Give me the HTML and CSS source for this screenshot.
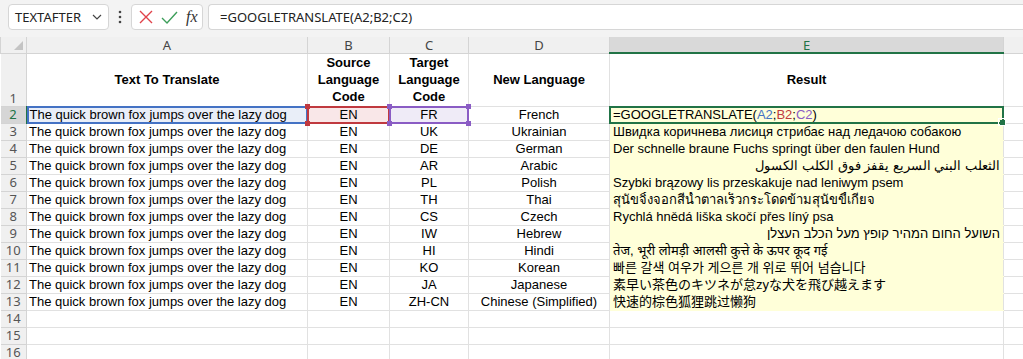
FILE: index.html
```html
<!DOCTYPE html>
<html lang="en">
<head>
    <meta charset="UTF-8">
    <title>GOOGLETRANSLATE - Sheet1</title>
    <link rel="stylesheet" href="styles.css">
</head>
<body>
    <!-- Formula bar -->
    <div class="toolbar">
        <div class="name-box">
            <span>TEXTAFTER</span>
            <svg class="chevron" width="10" height="6" viewBox="0 0 10 6"><path d="M1 1 L5 5 L9 1" fill="none" stroke="#444" stroke-width="1.2"/></svg>
        </div>
        <div class="more">
            <svg width="4" height="14" viewBox="0 0 4 14"><circle cx="2" cy="2" r="1.3" fill="#444"/><circle cx="2" cy="7" r="1.3" fill="#444"/><circle cx="2" cy="12" r="1.3" fill="#444"/></svg>
        </div>
        <div class="fn-box">
            <svg width="14" height="14" viewBox="0 0 14 14"><path d="M1 1 L13 13 M13 1 L1 13" stroke="#e0424a" stroke-width="1.4" fill="none"/></svg>
            <svg width="17" height="13" viewBox="0 0 17 13"><path d="M1 7 L6 12 L16 1" stroke="#3d9e5a" stroke-width="1.4" fill="none"/></svg>
            <span class="fx">fx</span>
        </div>
        <div class="formula">=GOOGLETRANSLATE(A2;B2;C2)</div>
    </div>

    <!-- Grid -->
    <table class="sheet">
        <colgroup>
            <col class="w-rh"><col class="w-a"><col class="w-b"><col class="w-c"><col class="w-d"><col class="w-e"><col class="w-f">
        </colgroup>
        <thead>
            <tr>
                <th class="corner"><span class="tri"></span></th>
                <th>A</th><th>B</th><th>C</th><th>D</th><th class="active">E</th><th></th>
            </tr>
        </thead>
        <tbody>
            <tr class="title-row">
                <th class="rn">1</th>
                <td class="hd">Text To Translate</td>
                <td class="hd">Source Language Code</td>
                <td class="hd">Target Language Code</td>
                <td class="hd">New Language</td>
                <td class="hd">Result</td>
                <td></td>
            </tr>
            <tr>
                <th class="rn active">2</th>
                <td class="ref ref-a">The quick brown fox jumps over the lazy dog</td>
                <td class="mid ref ref-b">EN</td>
                <td class="mid ref ref-c">FR</td>
                <td class="mid">French</td>
                <td class="res cur">=GOOGLETRANSLATE(<span class="k-a">A2</span>;<span class="k-b">B2</span>;<span class="k-c">C2</span>)</td>
                <td></td>
            </tr>
            <tr><th class="rn">3</th><td>The quick brown fox jumps over the lazy dog</td><td class="mid">EN</td><td class="mid">UK</td><td class="mid">Ukrainian</td><td class="res">Швидка коричнева лисиця стрибає над ледачою собакою</td><td></td></tr>
            <tr><th class="rn">4</th><td>The quick brown fox jumps over the lazy dog</td><td class="mid">EN</td><td class="mid">DE</td><td class="mid">German</td><td class="res">Der schnelle braune Fuchs springt über den faulen Hund</td><td></td></tr>
            <tr><th class="rn">5</th><td>The quick brown fox jumps over the lazy dog</td><td class="mid">EN</td><td class="mid">AR</td><td class="mid">Arabic</td><td class="res rtl" dir="rtl">الثعلب البني السريع يقفز فوق الكلب الكسول</td><td></td></tr>
            <tr><th class="rn">6</th><td>The quick brown fox jumps over the lazy dog</td><td class="mid">EN</td><td class="mid">PL</td><td class="mid">Polish</td><td class="res">Szybki brązowy lis przeskakuje nad leniwym psem</td><td></td></tr>
            <tr><th class="rn">7</th><td>The quick brown fox jumps over the lazy dog</td><td class="mid">EN</td><td class="mid">TH</td><td class="mid">Thai</td><td class="res">สุนัขจิ้งจอกสีน้ำตาลเร็วกระโดดข้ามสุนัขขี้เกียจ</td><td></td></tr>
            <tr><th class="rn">8</th><td>The quick brown fox jumps over the lazy dog</td><td class="mid">EN</td><td class="mid">CS</td><td class="mid">Czech</td><td class="res">Rychlá hnědá liška skočí přes líný psa</td><td></td></tr>
            <tr><th class="rn">9</th><td>The quick brown fox jumps over the lazy dog</td><td class="mid">EN</td><td class="mid">IW</td><td class="mid">Hebrew</td><td class="res rtl" dir="rtl">השועל החום המהיר קופץ מעל הכלב העצלן</td><td></td></tr>
            <tr><th class="rn">10</th><td>The quick brown fox jumps over the lazy dog</td><td class="mid">EN</td><td class="mid">HI</td><td class="mid">Hindi</td><td class="res">तेज, भूरी लोमड़ी आलसी कुत्ते के ऊपर कूद गई</td><td></td></tr>
            <tr><th class="rn">11</th><td>The quick brown fox jumps over the lazy dog</td><td class="mid">EN</td><td class="mid">KO</td><td class="mid">Korean</td><td class="res ko">빠른 갈색 여우가 게으른 개 위로 뛰어 넘습니다</td><td></td></tr>
            <tr><th class="rn">12</th><td>The quick brown fox jumps over the lazy dog</td><td class="mid">EN</td><td class="mid">JA</td><td class="mid">Japanese</td><td class="res ja">素早い茶色のキツネが怠zyな犬を飛び越えます</td><td></td></tr>
            <tr><th class="rn">13</th><td>The quick brown fox jumps over the lazy dog</td><td class="mid">EN</td><td class="mid">ZH-CN</td><td class="mid">Chinese (Simplified)</td><td class="res zh">快速的棕色狐狸跳过懒狗</td><td></td></tr>
            <tr><th class="rn">14</th><td></td><td></td><td></td><td></td><td></td><td></td></tr>
            <tr><th class="rn">15</th><td></td><td></td><td></td><td></td><td></td><td></td></tr>
            <tr><th class="rn">16</th><td></td><td></td><td></td><td></td><td></td><td></td></tr>
        </tbody>
    </table>
</body>
</html>
```

FILE: styles.css
```css
* {
    box-sizing: border-box;
}
body {
    margin: 0;
    background-color: #ffffff;
    font-family: 'Liberation Sans', Arial, sans-serif;
    overflow: hidden;
}

/* formula bar */
.toolbar {
    display: flex;
    align-items: flex-start;
    height: 37px;
    padding: 4px 0 0 8px;
    background-color: #f3f3f3;
    font-family: 'Noto Sans', sans-serif;
    font-size: 13px;
    color: #222;
}

.name-box {
    display: flex;
    justify-content: space-between;
    align-items: center;
    width: 101px;
    height: 26px;
    padding: 0 6px 0 6px;
    background-color: #fff;
    border: 1px solid #d6d6d6;
    border-radius: 4px;
}

.more {
    display: flex;
    justify-content: center;
    align-items: center;
    width: 22px;
    height: 26px;
}

.fn-box {
    display: flex;
    align-items: center;
    gap: 8px;
    width: 72px;
    height: 26px;
    padding-left: 7px;
    background-color: #fff;
    border: 1px solid #d6d6d6;
    border-radius: 4px;
}

.fx {
    font-family: 'Liberation Serif', serif;
    font-style: italic;
    font-size: 16px;
    color: #333;
}

.formula {
    flex: 1;
    height: 26px;
    margin-left: 5px;
    padding-left: 11px;
    line-height: 24px;
    background-color: #fff;
    border: 1px solid #d6d6d6;
    border-right: none;
    border-radius: 4px 0 0 4px;
}

/* sheet */
.sheet {
    border-collapse: collapse;
    table-layout: fixed;
    width: 1023px;
}
.w-rh { width: 26px; }
.w-a { width: 281px; }
.w-b { width: 82px; }
.w-c { width: 79px; }
.w-d { width: 141px; }
.w-e { width: 394px; }
.w-f { width: 20px; }

.sheet td {
    height: 17px;
    padding: 0 2px;
    border: 1px solid #e1e1e1;
    font-size: 13px;
    line-height: 15px;
    color: #000;
    white-space: nowrap;
    overflow: hidden;
}

.sheet thead th {
    height: 16px;
    padding: 0;
    background-color: #f0f0f0;
    border: 1px solid #d4d4d4;
    border-top: none;
    font-family: 'Noto Sans', sans-serif;
    font-size: 13px;
    font-weight: normal;
    line-height: 14px;
    color: #444;
}
.sheet thead th.active {
    background-color: #d9d9d9;
    color: #217346;
    border-bottom: 2px solid #217346;
}

.corner {
    position: relative;
}
.tri {
    position: absolute;
    right: 3px;
    bottom: 3px;
    border-left: 9px solid transparent;
    border-bottom: 9px solid #c4c4c4;
}

.rn {
    padding: 0;
    background-color: #f0f0f0;
    border: 1px solid #d4d4d4;
    border-left: none;
    font-family: 'Noto Sans', sans-serif;
    font-size: 13px;
    font-weight: normal;
    line-height: 15px;
    color: #555;
    text-align: center;
}
.rn.active {
    background-color: #d6d6d6;
    color: #217346;
    border-right: 2px solid #217346;
}

.title-row td,
.title-row th {
    height: 53px;
}
.title-row .rn {
    vertical-align: bottom;
}
.hd {
    font-weight: bold;
    text-align: center;
    white-space: normal !important;
    line-height: 17px !important;
}

.mid {
    text-align: center;
}

.res {
    padding-left: 3px !important;
    background-color: #ffffd9;
    border-top-color: #ffffd9 !important;
    border-bottom-color: #ffffd9 !important;
    font-family: 'Liberation Sans', 'Noto Sans', 'Noto Sans CJK JP', sans-serif;
}
.res.rtl {
    text-align: right;
    padding-right: 3px;
}
.res.ko { font-family: 'Liberation Sans', 'Noto Sans CJK KR', sans-serif; }
.res.ja { font-family: 'Liberation Sans', 'Noto Sans CJK JP', sans-serif; }
.res.zh { font-family: 'Liberation Sans', 'Noto Sans CJK SC', sans-serif; }

/* range highlights of the formula being edited */
.ref,
.cur {
    position: relative;
    overflow: visible !important;
}
.ref::after,
.cur::after {
    content: "";
    position: absolute;
    top: -1px;
    left: -1px;
    right: -1px;
    bottom: -1px;
    border: 2px solid;
    z-index: 1;
}
.ref::before,
.cur::before {
    content: "";
    position: absolute;
    top: -3px;
    left: -3px;
    right: -3px;
    bottom: -3px;
    z-index: 2;
}

.ref-a { background-color: #e9eef8; }
.ref-a::after { border-color: #4472c4; }

.ref-b { background-color: #f9e7e8; }
.ref-b::after { border-color: #c0393f; }
.ref-b::before {
    background:
        linear-gradient(#c0393f, #c0393f) top left / 5px 5px no-repeat,
        linear-gradient(#c0393f, #c0393f) top right / 5px 5px no-repeat,
        linear-gradient(#c0393f, #c0393f) bottom left / 5px 5px no-repeat,
        linear-gradient(#c0393f, #c0393f) bottom right / 5px 5px no-repeat;
}

.ref-c { background-color: #efebf7; }
.ref-c::after { border-color: #8a5cc4; }
.ref-c::before {
    background:
        linear-gradient(#8a5cc4, #8a5cc4) top left / 5px 5px no-repeat,
        linear-gradient(#8a5cc4, #8a5cc4) top right / 5px 5px no-repeat,
        linear-gradient(#8a5cc4, #8a5cc4) bottom left / 5px 5px no-repeat,
        linear-gradient(#8a5cc4, #8a5cc4) bottom right / 5px 5px no-repeat;
}

.cur::after { border-color: #217346; }
.cur::before {
    background: linear-gradient(#217346, #217346) bottom right / 5px 5px no-repeat;
    top: auto;
    left: auto;
    width: 6px;
    height: 6px;
    right: -3px;
    bottom: -3px;
    border: 1px solid #fff;
}

.k-a { color: #4472c4; }
.k-b { color: #c0393f; }
.k-c { color: #8a5cc4; }
```
